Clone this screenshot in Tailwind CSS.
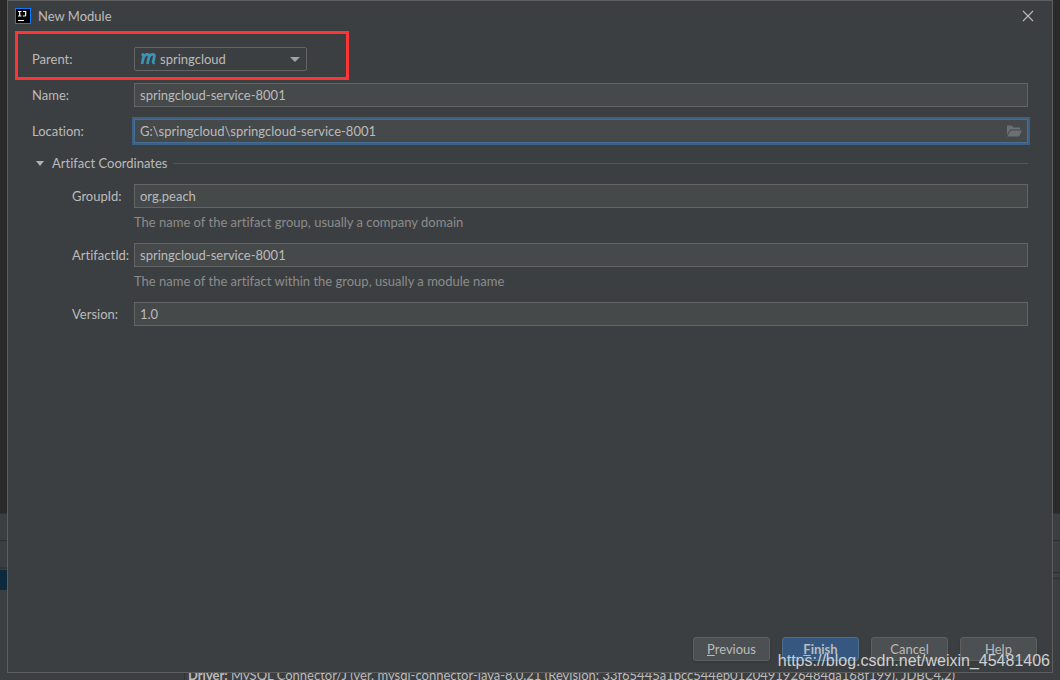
<!DOCTYPE html>
<html lang="en">
<head>
<meta charset="utf-8">
<title>New Module</title>
<script src="https://cdn.jsdelivr.net/npm/@tailwindcss/browser@4"></script>
</head>
<body class="relative h-screen overflow-hidden bg-[#3c3f41] font-['Lato','Noto_Sans',sans-serif] text-[13px] leading-5 text-[#bbbbbb] [font-variant-ligatures:none]">

<!-- IDE window behind the dialog -->
<div class="flex h-full flex-col">
  <div class="h-[513px] shrink-0 bg-[#2a2a2a]"></div>
  <div class="flex min-h-0 flex-1 justify-between border-t border-[#323232]">
    <div class="w-[7px]">
      <div class="h-[27px] border-b border-[#2c2e2f]"></div>
      <div class="h-[28px] border-b-2 border-[#323436]"></div>
      <div class="mt-px h-5 bg-[#0d293e]"></div>
    </div>
    <div class="w-[7px]">
      <div class="h-[27px] border-b border-[#2c2e2f]"></div>
      <div class="h-8 border-b border-[#2c2e2f]"></div>
      <div class="h-[6px] border-b border-[#2c2e2f]"></div>
    </div>
  </div>
</div>
<p class="absolute top-[666px] left-[184px] border-l border-[#323232] pl-[3px] leading-[18px] whitespace-nowrap"><b>Driver:</b> MySQL Connector/J (ver. mysql-connector-java-8.0.21 (Revision: 33f65445a1bcc544eb0120491926484da168f199), JDBC4.2)</p>

<main class="absolute inset-x-[7px] top-0 bottom-[7px] flex flex-col border border-[#5e5e5e] bg-[#3c3f41]">
  <header class="flex h-[29px] items-center pr-[17px] pl-[7px]">
    <svg class="size-4" viewBox="0 0 16 16" aria-hidden="true">
      <rect width="16" height="16" fill="#087cfa"/>
      <rect x="1" y="1" width="14" height="14" fill="#000"/>
      <path d="M3 3.500h3.400M4.700 3.500v4.500M3 8h3.400M8 3.500h2.700v3.500q0 1-1 1h-1.900" fill="none" stroke="#fff" stroke-width="1.200"/>
      <path d="M3 12h6v1H3z" fill="#fff"/>
    </svg>
    <h1 class="ml-[7px] flex-1">New Module</h1>
    <button type="button" aria-label="Close" class="p-px">
      <svg class="size-3" viewBox="0 0 12 12" fill="none" stroke="#bbbbbb" stroke-width="1.100"><path d="M1 1l10 10M11 1L1 11"/></svg>
    </button>
  </header>

  <form class="flex flex-1 flex-col px-6 pt-[17px]">
    <div class="flex items-center">
      <label for="parent" class="w-[102px]">Parent:</label>
      <div class="relative h-6 w-[173px]">
        <select id="parent" class="size-full appearance-none rounded-[2px] border border-[#646464] bg-[#3c3f41] pl-[25px]"><option>springcloud</option></select>
        <svg class="pointer-events-none absolute top-[6px] left-[6px] h-3 w-4" viewBox="0 0 16 12" fill="none" stroke="#3d93b3" stroke-width="2.800" aria-hidden="true">
          <path d="M2 11L4.200 1M1.500 1.600H4M3.600 4.500Q5 1.300 7.300 1.400Q9.500 1.500 9 3.800L7.400 11M8.700 4.500Q10.300 1.300 12.700 1.400Q14.800 1.500 14.300 3.800L13.200 8.800Q13 10.200 14.700 9.600"/>
        </svg>
        <svg class="pointer-events-none absolute top-[10px] right-[7px] h-[5px] w-[10px]" viewBox="0 0 10 5" fill="#a0a3a5" aria-hidden="true"><path d="M0 0h10L5 5z"/></svg>
      </div>
    </div>
    <div class="mt-3 flex items-center">
      <label for="name" class="w-[102px]">Name:</label>
      <input id="name" type="text" value="springcloud-service-8001" class="h-6 min-w-0 flex-1 border border-[#646464] bg-[#45494a] px-[5px]">
    </div>
    <div class="mt-3 flex items-center">
      <label for="location" class="w-[102px]">Location:</label>
      <div class="flex h-6 min-w-0 flex-1 items-center border border-[#466d94] bg-[#45494a] pr-[5px] outline-2 outline-[#3d6185]">
        <input id="location" type="text" value="G:\springcloud\springcloud-service-8001" class="h-full min-w-0 flex-1 px-[5px] outline-none">
        <button type="button" aria-label="Browse">
          <svg class="h-3 w-4" viewBox="0 0 16 12" fill="#6a7073"><path d="M1 0.500h4.500l2 2H14v2H4L1 10z"/><path d="M4.600 5.500H16l-3 6H1.200z"/></svg>
        </button>
      </div>
    </div>

    <fieldset>
      <legend class="flex w-full items-center pt-3 leading-[17px]">
        <button type="button" class="flex items-center">
          <svg class="mr-2 ml-1 h-[5px] w-2" viewBox="0 0 8 5" fill="#b0b2b3" aria-hidden="true"><path d="M0 0h8L4 5z"/></svg>
          Artifact Coordinates
        </button>
        <span class="ml-[6px] h-px flex-1 bg-[#555555]"></span>
      </legend>
      <div class="mt-3 flex items-center">
        <label for="group" class="w-[102px] pl-10 whitespace-nowrap">GroupId:</label>
        <input id="group" type="text" value="org.peach" class="h-6 min-w-0 flex-1 border border-[#646464] bg-[#45494a] px-[5px]">
      </div>
      <p class="mb-[6px] ml-[102px] leading-[29px] text-[#8c8c8c]">The name of the artifact group, usually a company domain</p>
      <div class="flex items-center">
        <label for="artifact" class="w-[102px] pl-10 whitespace-nowrap">ArtifactId:</label>
        <input id="artifact" type="text" value="springcloud-service-8001" class="h-6 min-w-0 flex-1 border border-[#646464] bg-[#45494a] px-[5px]">
      </div>
      <p class="mb-[6px] ml-[102px] leading-[29px] text-[#8c8c8c]">The name of the artifact within the group, usually a module name</p>
      <div class="flex items-center">
        <label for="version" class="w-[102px] pl-10 whitespace-nowrap">Version:</label>
        <input id="version" type="text" value="1.0" class="h-6 min-w-0 flex-1 border border-[#646464] bg-[#45494a] px-[5px]">
      </div>
    </fieldset>
  </form>

  <footer class="flex justify-end gap-3 pr-[15px] pb-[11px]">
    <button type="button" class="h-6 w-[77px] rounded-[3px] border border-[#5e6060] bg-[#4c5052] shadow-sm"><u>P</u>revious</button>
    <button type="submit" class="h-6 w-[77px] rounded-[3px] border border-[#4c708c] bg-[#365880] font-bold shadow-sm"><u>F</u>inish</button>
    <button type="button" class="h-6 w-[77px] rounded-[3px] border border-[#5e6060] bg-[#4c5052] shadow-sm">Cancel</button>
    <button type="button" class="h-6 w-[77px] rounded-[3px] border border-[#5e6060] bg-[#4c5052] shadow-sm">Help</button>
  </footer>
</main>

<!-- Annotation frame and watermark -->
<div class="pointer-events-none absolute top-[31px] left-[15px] h-[49px] w-[334px] border-3 border-[#fc3634]"></div>
<p class="pointer-events-none absolute right-[10px] bottom-[9px] font-['Liberation_Sans',Arial,sans-serif] text-[16px] leading-5 text-[#d0d0d0]">https://blog.csdn.net/weixin_45481406</p>
</body>
</html>
